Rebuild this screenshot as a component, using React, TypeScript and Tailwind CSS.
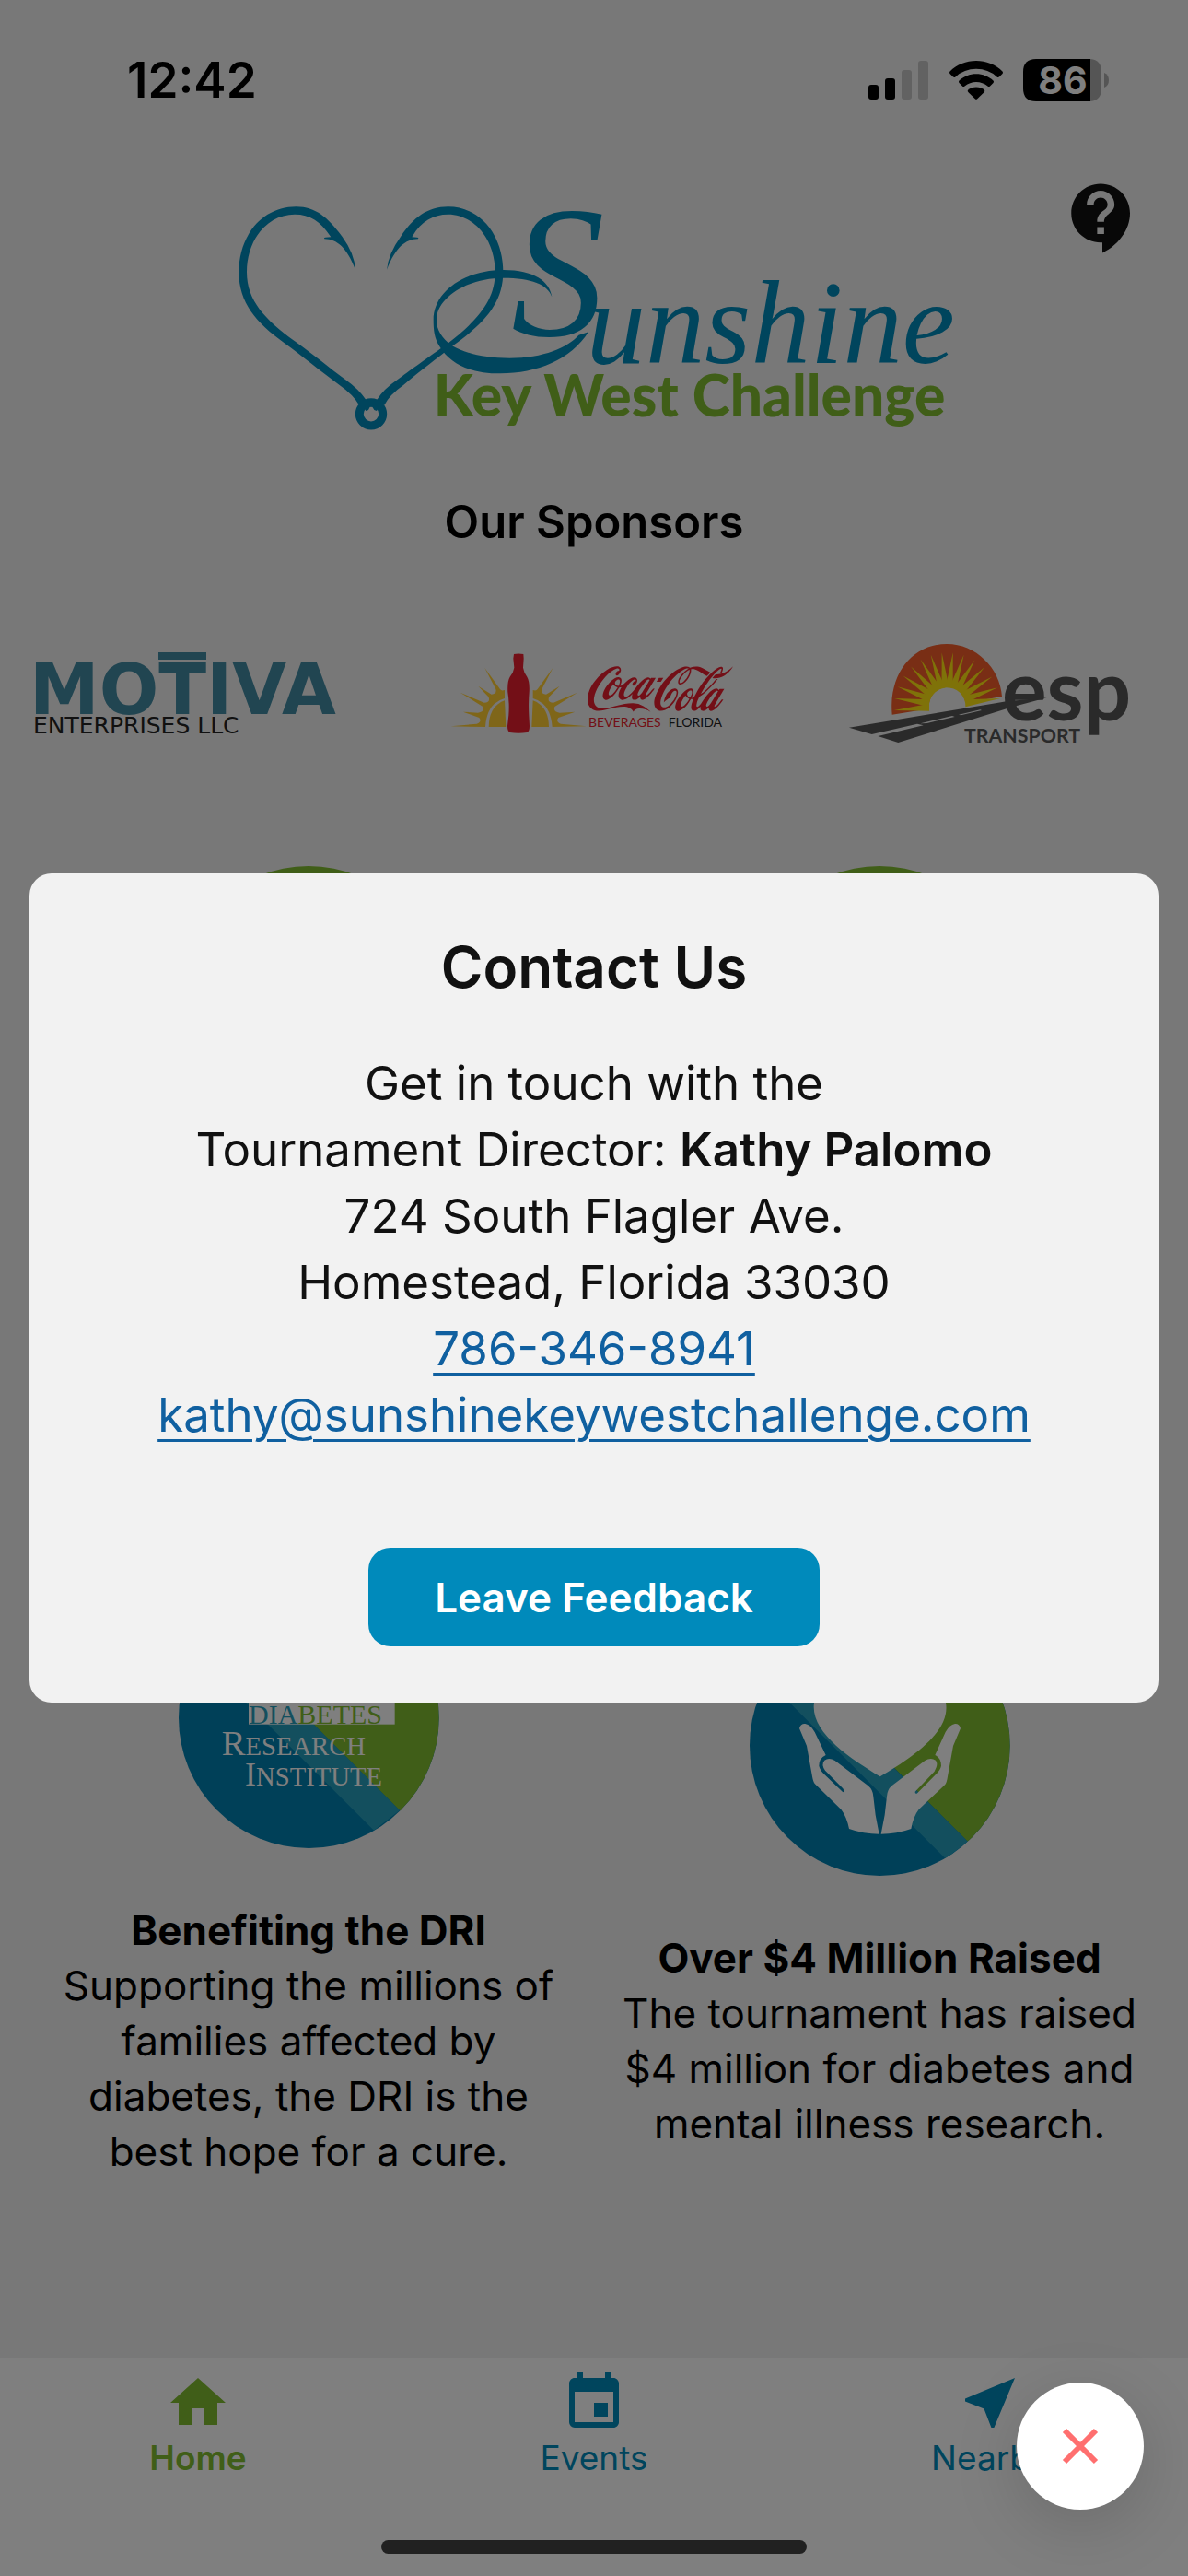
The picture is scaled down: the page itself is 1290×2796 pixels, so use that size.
import { MdContactSupport, MdEvent, MdHome, MdNearMe } from "react-icons/md";
import { SiCocacola } from "react-icons/si";

const BLUE = "#008aba";
const GREEN = "#80bd30";
const LATO = "Lato, sans-serif";

function StatusBar() {
  return (
    <div className="flex h-[174px] items-center justify-between pr-[84px] pl-[138px]">
      <time className="text-[53px] leading-none font-semibold">12:42</time>
      <div className="flex items-center gap-[22px]">
        <svg className="h-[42px] w-[66px]" viewBox="0 0 66 42" aria-label="Signal">
          <rect x="0" y="26" width="11" height="16" rx="3" />
          <rect x="18" y="19" width="11" height="23" rx="3" />
          <rect x="36" y="10" width="11" height="32" rx="3" fill="#c4c4c4" />
          <rect x="54" y="0" width="11" height="42" rx="3" fill="#c4c4c4" />
        </svg>
        <svg className="h-[42px] w-[58px]" viewBox="0 0 58 42" aria-label="Wi-Fi">
          <path d="M29 0C40 0 50 4 57.500 11.500Q58.500 12.800 57.500 14L54 17.500Q52.800 18.500 51.500 17.400Q42 8.800 29 8.800T6.500 17.400Q5.200 18.500 4 17.500L.5 14Q-.5 12.800.5 11.500C8 4 18 0 29 0Z" />
          <path d="M29 14.300C36 14.300 42.500 17 47.500 21.500Q48.700 22.700 47.500 24L44 27.500Q42.800 28.500 41.500 27.500Q36 23 29 23T16.500 27.500Q15.200 28.500 14 27.500L10.500 24Q9.300 22.700 10.500 21.500C15.500 17 22 14.300 29 14.300Z" />
          <path d="M29 28.500C32.500 28.500 35.500 29.700 37.700 31.600Q38.800 32.700 37.700 33.900L30.200 41.300Q29 42.300 27.800 41.300L20.300 33.900Q19.200 32.700 20.300 31.600C22.500 29.700 25.500 28.500 29 28.500Z" />
        </svg>
        <svg className="h-[46px] w-[95px] overflow-visible" viewBox="0 0 95 46" aria-label="Battery">
          <path d="M73 0Q85 1 85 14V32Q85 45 73 46Z" fill="#aaa" />
          <path d="M14 0H73V46H14Q0 46 0 32V14Q0 0 14 0Z" />
          <path d="M88 15Q93 17 93 23T88 31Z" fill="#aaa" />
          <text x="43" y="38" fontSize="41" fontWeight="700" textAnchor="middle" fill="#fff">
            86
          </text>
        </svg>
      </div>
    </div>
  );
}

function BrandLogo() {
  return (
    <svg className="h-[246px] w-[780px] overflow-visible" viewBox="45 65 2340 738" role="img" aria-label="Sunshine Key West Challenge">
      <g fill={BLUE}>
        <path d="M438 278C410 205 378 178 337 177Q334 173 340 172L358 171C325 120 292 97 240 97C150 97 84 180 84 285C84 380 145 440 240 510C310 560 350 595 405 635Q448 665 474 703L450 718Q432 685 385 652C320 605 270 562 205 515C115 450 58 385 58 285C58 165 135 72 245 72C310 72 350 110 395 170Q435 225 438 278Z" />
        <path d="M540 278C568 205 600 178 642 177Q645 173 639 172L622 171C650 120 690 97 740 97C825 97 893 180 893 285C893 375 840 440 735 520C650 580 615 605 575 635Q530 665 506 703L532 718Q548 685 595 652C650 605 700 570 755 525C860 450 919 385 919 285C919 165 845 72 740 72C670 72 625 110 585 170Q545 225 540 278Z" />
        <path d="M1078 366C1065 325 1010 304 920 304C800 304 702 370 702 440C702 475 720 500 750 523C800 552 860 565 940 565C1050 565 1130 530 1165 490L1197 480C1140 570 1030 615 910 615C820 615 750 590 712 527C695 500 692 475 692 440C692 350 790 278 920 278C1020 278 1070 315 1078 366Z" />
        <text x="945" y="490" fontFamily="'Liberation Serif', serif" fontStyle="italic" fontSize="610">
          S
        </text>
        <text x="1190" y="582" fontFamily="'Liberation Serif', serif" fontStyle="italic" fontSize="386">
          unshine
        </text>
      </g>
      <circle cx="489" cy="747" r="38" fill="none" stroke={BLUE} strokeWidth="27" />
      <path d="M466 728L472 737L480 734L485 724H493L499 734L507 737L512 728L502 712H476Z" fill={BLUE} />
      <text x="692" y="754" fontFamily={LATO} fontWeight="900" fontSize="187" fill={GREEN}>
        Key West Challenge
      </text>
    </svg>
  );
}

function MotivaLogo() {
  return (
    <svg className="h-[90px] w-[354px] overflow-visible" viewBox="0 -3 354 90" role="img" aria-label="Motiva Enterprises LLC">
      <g fill="#428aa2">
        <text x="-6" y="64" fontFamily="'DejaVu Sans', sans-serif" fontWeight="700" fontSize="76">
          MOTIVA
        </text>
        <rect x="134" y="-3" width="52" height="8" />
      </g>
      <text x="-2" y="85" fontFamily="'DejaVu Sans', sans-serif" fontSize="25" fill="#222">
        ENTERPRISES LLC
      </text>
    </svg>
  );
}

function CocaColaLogo() {
  return (
    <div className="relative h-[88px] w-[312px]">
      <svg className="h-full w-full overflow-visible" viewBox="96 88 936 264" role="img" aria-label="Coca-Cola Beverages Florida">
        <g fill="#ffcc33">
          <path d="M98 326L182 318Q200 312 190 298L138 279L186 282Q208 280 202 262L128 216L206 249Q228 248 220 230L187 195L230 222Q248 222 244 205L208 136L258 205Q262 212 273 208V235Q215 250 210 328Z" />
          <path d="M540 326L456 318Q438 312 448 298L502 279L452 282Q430 280 436 262L510 216L432 249Q410 248 418 230L452 195L408 222Q390 222 394 205L430 136L380 205Q376 212 365 208V235Q422 250 428 328Z" />
          <path d="M221 328Q222 260 273 242L277 328Z" />
          <path d="M417 328Q416 260 365 242L361 328Z" />
        </g>
        <path d="M303 91Q318 88 334 91L335 105L333 135Q335 150 346 165Q355 180 353 215Q350 250 352 290L354 325Q354 342 346 346Q318 350 290 346Q282 342 282 325L286 290Q289 250 283 215Q281 180 290 165Q302 150 304 135L301 105Z" fill="#e61e2e" />
        <text x="546" y="328" fontFamily={LATO} fontWeight="400" fontSize="42" fill="#e61e2e">
          BEVERAGES
        </text>
        <text x="806" y="328" fontFamily={LATO} fontWeight="400" fontSize="42" fill="#222">
          FLORIDA
        </text>
      </svg>
      <SiCocacola aria-hidden="true" className="absolute -top-[40px] left-[149px] h-[158px] w-[158px] text-[#e61e2e]" />
    </div>
  );
}

const RAYS = [-5, 8, 21, 34, 47, 60, 72, 84, 96, 108, 121, 134, 147, 160, 172];

function EspLogo() {
  return (
    <svg className="h-[110px] w-[306px] overflow-visible" viewBox="68 84 918 330" role="img" aria-label="ESP Transport">
      <path d="M208 317C196 190 270 87 387 87C480 87 560 165 566 258L448 279C440 245 420 227 388 227C350 227 325 260 328 298Z" fill="#f25c2a" />
      <g fill="#ffe512">
        {RAYS.map((angle) => (
          <path key={angle} d="M328 300L330 276L214 288Z" transform={`rotate(${angle} 388 288)`} />
        ))}
      </g>
      <g fill="#555">
        <path d="M68 359L580 274L712 262L600 292L228 408L162 387L310 352L290 347L142 381Z" />
        <path d="M322 345L412 324L404 321L300 346ZM432 319L500 303L495 301L425 317Z" fill="#f0f0f0" />
        <text x="566" y="337" fontFamily={LATO} fontWeight="700" fontSize="273">
          esp
        </text>
        <text x="443" y="408" fontFamily={LATO} fontWeight="700" fontSize="64">
          TRANSPORT
        </text>
      </g>
    </svg>
  );
}

function Disc() {
  return (
    <svg className="h-[283px] w-[283px]" viewBox="0 0 283 283" aria-hidden="true">
      <circle cx="141" cy="141" r="141" fill={GREEN} />
    </svg>
  );
}

function InstituteBadge() {
  return (
    <svg className="h-[283px] w-[283px]" viewBox="102 -291 849 849" role="img" aria-label="Diabetes Research Institute">
      <defs>
        <clipPath id="institute-disc">
          <circle cx="526" cy="134" r="424" />
        </clipPath>
        <linearGradient id="institute-band" x1="560" y1="320" x2="800" y2="420" gradientUnits="userSpaceOnUse">
          <stop offset="0" stopColor="#2a9cba" />
          <stop offset="0.6" stopColor="#24a6cc" />
          <stop offset="1" stopColor="#4cabc8" />
        </linearGradient>
      </defs>
      <g clipPath="url(#institute-disc)">
        <rect x="100" y="-300" width="860" height="870" fill="#0080b0" />
        <path d="M87 -300H960V570L822 435Z" fill={GREEN} />
        <path d="M-20 -258L738 500L822 435L87 -300Z" fill="#269fbd" />
        <rect x="330" y="-80" width="476" height="235" fill="#fff" />
      </g>
      <g fontFamily="'Liberation Serif', serif" fill="#fff">
        <text x="330" y="153" fontSize="90" fill={GREEN}>
          <tspan fill="#269fbd">DIA</tspan>BETES
        </text>
        <text x="242" y="256" fontSize="116">
          R<tspan fontSize="86">ESEARCH</tspan>
        </text>
        <text x="318" y="354" fontSize="108">
          I<tspan fontSize="86">NSTITUTE</tspan>
        </text>
      </g>
    </svg>
  );
}

function HandsBadge() {
  return (
    <svg className="h-[283px] w-[283px]" viewBox="104 -201 849 849" role="img" aria-label="Hands holding a heart">
      <defs>
        <clipPath id="hands-disc">
          <circle cx="528" cy="224" r="424" />
        </clipPath>
      </defs>
      <g clipPath="url(#hands-disc)">
        <rect x="100" y="-210" width="860" height="870" fill="#0080b0" />
        <path d="M-20 -300H960V680L815 537Z" fill={GREEN} />
        <path d="M-20 -170L234 84L742 592L815 537L360 84L60 -220Z" fill="#269fbd" />
      </g>
      <g fill="#fff">
        <path d="M314 84C300 180 430 265 529 325C630 265 760 180 743 84C743 0 590 -60 529 20C470 -60 314 0 314 84Z" />
        <path d="M266 168Q270 152 285 153Q303 156 316 180L352 255Q330 265 330 290Q333 305 350 320L408 376Q414 374 408 364L350 305Q336 285 348 272Q362 262 382 273L490 355Q506 368 507 390L514 450L526 512Q475 512 428 495Q420 455 402 432L316 348Q311 342 308 325L290 225Z" />
        <path d="M791 168Q787 152 773 153Q755 156 742 180L708 255Q728 265 728 290Q725 305 708 320L649 380Q642 381 643 374L706 308Q720 285 710 272Q694 262 675 273L567 355Q552 368 551 390L544 450L532 512Q583 512 630 495Q637 455 655 432L740 352Q746 346 749 325L767 225Z" />
      </g>
    </svg>
  );
}

const TABS = [
  { label: "Home", Icon: MdHome, style: "font-semibold text-[#80bd30]" },
  { label: "Events", Icon: MdEvent, style: "text-[#008aba]" },
  { label: "Nearby", Icon: MdNearMe, style: "text-[#008aba]" },
];

export default function App() {
  return (
    <div className="relative flex min-h-screen flex-col bg-[#f0f0f0] font-['Inter',sans-serif] text-black">
      <StatusBar />
      <header className="relative flex justify-center pt-[48px]">
        <BrandLogo />
        <button type="button" aria-label="Help" className="absolute top-[18px] right-[48px] text-[#111]">
          <MdContactSupport className="h-[90px] w-[90px]" />
        </button>
      </header>
      <main className="flex flex-1 flex-col">
        <h1 className="mt-[69px] text-center text-[49px] leading-[60px] font-semibold">Our Sponsors</h1>
        <section className="mt-[83px] grid h-[146px] grid-cols-3 place-items-center">
          <MotivaLogo />
          <CocaColaLogo />
          <EspLogo />
        </section>
        <section className="mt-[114px] grid grid-cols-2 place-items-center px-[25px]">
          <Disc />
          <Disc />
        </section>
        <section className="mt-[500px] grid grid-cols-2 items-center px-[25px] text-center text-[44px] leading-[60px]">
          <article className="flex flex-col items-center">
            <InstituteBadge />
            <h2 className="mt-[59px] font-bold">Benefiting the DRI</h2>
            <p>
              Supporting the millions of
              <br />
              families affected by
              <br />
              diabetes, the DRI is the
              <br />
              best hope for a cure.
            </p>
          </article>
          <article className="flex flex-col items-center">
            <HandsBadge />
            <h2 className="mt-[59px] font-bold">Over $4 Million Raised</h2>
            <p>
              The tournament has raised
              <br />
              $4 million for diabetes and
              <br />
              mental illness research.
            </p>
          </article>
        </section>
      </main>
      <nav className="grid h-[237px] grid-cols-3 bg-white pt-[13px]">
        {TABS.map(({ label, Icon, style }) => (
          <a key={label} href={`#${label.toLowerCase()}`} className={`flex flex-col items-center text-[37px] leading-[48px] ${style}`}>
            <Icon className="h-[72px] w-[72px]" />
            {label}
          </a>
        ))}
      </nav>

      <div className="absolute inset-0 flex items-center bg-black/50 px-[32px]">
        <div role="dialog" aria-labelledby="contact-title" className="flex w-full flex-col items-center rounded-[24px] bg-[#f2f2f2] pt-[66px] pb-[61px] text-[#111]">
          <h2 id="contact-title" className="text-[62px] leading-[72px] font-semibold">
            Contact Us
          </h2>
          <p className="mt-[54px] text-center text-[51px] leading-[72px]">
            Get in touch with the
            <br />
            Tournament Director: <strong className="font-semibold">Kathy Palomo</strong>
            <br />
            724 South Flagler Ave.
            <br />
            Homestead, Florida 33030
            <br />
            <a href="tel:786-346-8941" className="text-[#1060a0] underline decoration-3 underline-offset-8">
              786-346-8941
            </a>
            <br />
            <a href="mailto:kathy@sunshinekeywestchallenge.com" className="text-[#1060a0] underline decoration-3 underline-offset-8">
              kathy@sunshinekeywestchallenge.com
            </a>
          </p>
          <button type="button" className="mt-[108px] h-[107px] rounded-[24px] bg-[#008abb] px-[72px] text-[44px] font-semibold text-white">
            Leave Feedback
          </button>
        </div>
      </div>

      <button type="button" aria-label="Close" className="absolute right-[48px] bottom-[72px] flex h-[138px] w-[138px] items-center justify-center rounded-full bg-white shadow-[0_18px_72px_rgba(0,0,0,0.15)]">
        <svg className="h-[40px] w-[40px]" viewBox="0 0 40 40" fill="none" stroke="#ff6f6f" strokeWidth="6">
          <path d="M3 3L37 37M37 3L3 37" />
        </svg>
      </button>
      <div className="absolute bottom-[24px] left-1/2 h-[15px] w-[462px] -translate-x-1/2 rounded-full bg-[#212121]" />
    </div>
  );
}
